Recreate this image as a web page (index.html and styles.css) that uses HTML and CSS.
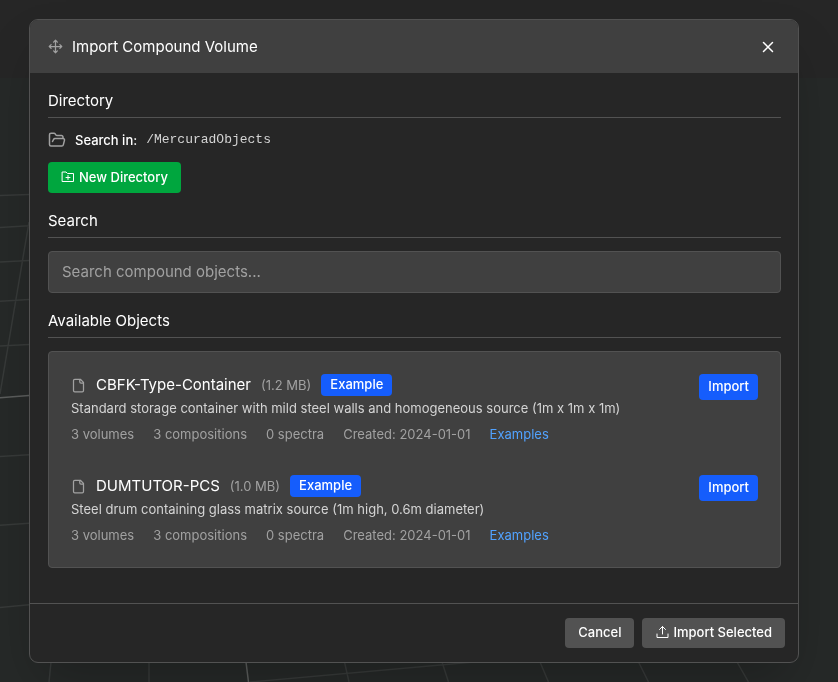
FILE: index.html
```html
<!DOCTYPE html>
<html lang="en">
<head>
<meta charset="utf-8">
<meta name="viewport" content="width=device-width, initial-scale=1">
<title>Import Compound Volume</title>
<link rel="stylesheet" href="styles.css">
</head>
<body>
<svg class="scene" viewBox="0 0 838 682" preserveAspectRatio="none" aria-hidden="true">
  <rect y="78" width="838" height="604" fill="#262928"/>
  <g class="grid-lines">
    <path d="M0 195.5 29 194.5M0 227.4 29 225.7M0 262 29 260.5M0 301.3 29 299.6M0 346 29 344.4M0 456.4 29 454.7M0 525.3 29 523.3M0 607.4 29 604.7M29 222 0 394"/>
    <path d="M51 662 49 682M149 662V682M344.500 662 349 682M442 662 448.500 682M540 662 548.500 682M638.500 662 648.500 682M737 662 748.500 682M250 682 474 662"/>
  </g>
  <path class="axis-line" d="M0 397.700 29 395.500M246 662 248.500 682"/>
</svg>
<main class="stage">
  <section class="dialog" role="dialog" aria-labelledby="dialog-title">
    <header class="dialog-header">
      <svg class="icon icon-move" viewBox="0 0 24 24" aria-hidden="true"><path d="M12 2v20M2 12h20M15 19l-3 3-3-3M19 9l3 3-3 3M5 9l-3 3 3 3M9 5l3-3 3 3"/></svg>
      <h1 class="dialog-title" id="dialog-title">Import Compound Volume</h1>
      <button class="close" type="button" aria-label="Close"><svg class="icon icon-close" viewBox="0 0 24 24" aria-hidden="true"><path d="M18 6 6 18M6 6l12 12"/></svg></button>
    </header>

    <div class="dialog-body">
      <h2 class="section-title">Directory</h2>
      <div class="path-row">
        <svg class="icon icon-folder" viewBox="0 0 24 24" aria-hidden="true"><path d="m6 14 1.500-2.900A2 2 0 0 1 9.240 10H20a2 2 0 0 1 1.940 2.500l-1.540 6a2 2 0 0 1-1.950 1.500H4a2 2 0 0 1-2-2V5a2 2 0 0 1 2-2h3.900a2 2 0 0 1 1.690.9l.81 1.200a2 2 0 0 0 1.670.9H18a2 2 0 0 1 2 2v2"/></svg>
        <span class="path-label">Search in:</span>
        <code class="path">/MercuradObjects</code>
      </div>
      <button class="button button-new" type="button"><svg class="icon icon-small" viewBox="0 0 14 14" aria-hidden="true"><path d="M1.500 2h3.500l1.500 1.500H12.500v8h-11zM7 5.500v4M5 7.500h4"/></svg>New Directory</button>

      <h2 class="section-title"><label for="search">Search</label></h2>
      <input class="search" id="search" type="text" placeholder="Search compound objects...">

      <h2 class="section-title">Available Objects</h2>
      <ul class="objects">
        <li class="object">
          <div class="object-info">
            <div class="object-head">
              <svg class="icon icon-file" viewBox="0 0 24 24" aria-hidden="true"><path d="M15 2H6a2 2 0 0 0-2 2v16a2 2 0 0 0 2 2h12a2 2 0 0 0 2-2V7ZM14 2v4a2 2 0 0 0 2 2h4"/></svg>
              <h3 class="object-name">CBFK-Type-Container</h3>
              <span class="object-size">(1.2 MB)</span>
              <span class="badge">Example</span>
            </div>
            <p class="description">Standard storage container with mild steel walls and homogeneous source (1m x 1m x 1m)</p>
            <div class="meta"><span>3 volumes</span><span>3 compositions</span><span>0 spectra</span><span>Created: 2024-01-01</span><span class="category">Examples</span></div>
          </div>
          <button class="button button-import" type="button">Import</button>
        </li>
        <li class="object">
          <div class="object-info">
            <div class="object-head">
              <svg class="icon icon-file" viewBox="0 0 24 24" aria-hidden="true"><path d="M15 2H6a2 2 0 0 0-2 2v16a2 2 0 0 0 2 2h12a2 2 0 0 0 2-2V7ZM14 2v4a2 2 0 0 0 2 2h4"/></svg>
              <h3 class="object-name">DUMTUTOR-PCS</h3>
              <span class="object-size">(1.0 MB)</span>
              <span class="badge">Example</span>
            </div>
            <p class="description">Steel drum containing glass matrix source (1m high, 0.6m diameter)</p>
            <div class="meta"><span>3 volumes</span><span>3 compositions</span><span>0 spectra</span><span>Created: 2024-01-01</span><span class="category">Examples</span></div>
          </div>
          <button class="button button-import" type="button">Import</button>
        </li>
      </ul>
    </div>

    <footer class="dialog-footer">
      <button class="button" type="button">Cancel</button>
      <button class="button" type="button"><svg class="icon icon-small" viewBox="0 0 14 14" aria-hidden="true"><path d="M7.500 9V1.500M4.500 4.500l3-3 3 3M2 9v3.500h11V9"/></svg>Import Selected</button>
    </footer>
  </section>
</main>
</body>
</html>
```
FILE: styles.css
```css
* { box-sizing: border-box; }

body {
  margin: 0;
  background: #262626;
  color: #fff;
  font: 400 13px/18px Inter, "Liberation Sans", sans-serif;
}

h1, h2, h3, p, ul { margin: 0; padding: 0; font-weight: 400; }

button, input { font: inherit; color: inherit; }

.scene { position: fixed; inset: 0; width: 100%; height: 100%; }
.scene path { fill: none; }
.grid-lines { stroke: #373a39; stroke-width: 1.5px; }
.axis-line { stroke: #5b5d5c; stroke-width: 1.5px; }

.stage {
  position: relative;
  display: flex;
  min-height: 100vh;
  padding: 19px 39px 19px 29px;
}

.dialog {
  display: flex;
  flex: 1;
  flex-direction: column;
  min-width: 0;
  overflow: hidden;
  border: 1px solid #525252;
  border-radius: 9px;
  background: #262626;
  box-shadow: 0 25px 50px -12px rgb(0 0 0 / 25%);
}

.icon { flex: none; fill: none; stroke: currentColor; stroke-width: 2; stroke-linecap: round; stroke-linejoin: round; }

.dialog-header {
  display: flex;
  align-items: center;
  gap: 9px;
  padding: 14px 18px;
  background: #404040;
}
.dialog-title { flex: 1; font-size: 15px; line-height: 25px; }
.icon-move { width: 15px; height: 15px; color: #a1a1a1; }
.close { display: flex; padding: 3px; border: 0; background: none; }
.icon-close { width: 18px; height: 18px; }

.dialog-body { flex: 1; padding: 16px 17px 18px 18px; }

.section-title {
  margin-bottom: 13px;
  padding-bottom: 4px;
  border-bottom: 1px solid #525252;
  font-size: 15px;
  line-height: 24px;
}

.path-row { display: flex; align-items: center; gap: 9px; margin-bottom: 13px; }
.icon-folder { width: 18px; height: 18px; color: #a1a1a1; }
.path-label { font-weight: 500; }
.path { color: #d4d4d4; font: 13px/18px "Liberation Mono", monospace; }

.button {
  display: inline-flex;
  align-items: center;
  gap: 4px;
  padding: 5px 13px 7px;
  border: 0;
  border-radius: 4px;
  background: #525252;
  font-weight: 500;
}
.icon-small { width: 14px; height: 14px; stroke-width: 1; }
.button-new { margin-bottom: 16px; padding: 6px 13px 7px; background: #00a63e; }

.search {
  display: block;
  width: 100%;
  height: 42px;
  margin-bottom: 16px;
  padding: 0 13px 2px;
  border: 1px solid #525252;
  border-radius: 4px;
  background: #404040;
  font-size: 15px;
}
.search::placeholder { color: #a1a1a1; opacity: 1; }

.objects {
  padding: 9px;
  border: 1px solid #525252;
  border-radius: 4px;
  background: #404040;
  list-style: none;
}
.object { display: flex; align-items: flex-start; justify-content: space-between; padding: 13px 13px 14px; }
.object + .object { margin-top: 5px; }
.object-info { min-width: 0; }
.object-head { display: flex; align-items: center; gap: 10px; margin-bottom: 3px; }
.icon-file { width: 15px; height: 15px; color: #a1a1a1; }
.object-name { font-size: 15px; line-height: 22px; }
.object-size { color: #a1a1a1; }
.badge { padding: 1px 9px 3px; border-radius: 4px; background: #155dfc; font-weight: 500; }
.description { margin-bottom: 8px; color: #d4d4d4; }
.meta { display: flex; flex-wrap: wrap; gap: 19px; color: #a1a1a1; }
.category { color: #51a2ff; }
.button-import { padding: 3px 9px 5px; background: #155dfc; }

.dialog-footer {
  display: flex;
  justify-content: flex-end;
  gap: 8px;
  padding: 14px 13px;
  border-top: 1px solid #525252;
}
```
